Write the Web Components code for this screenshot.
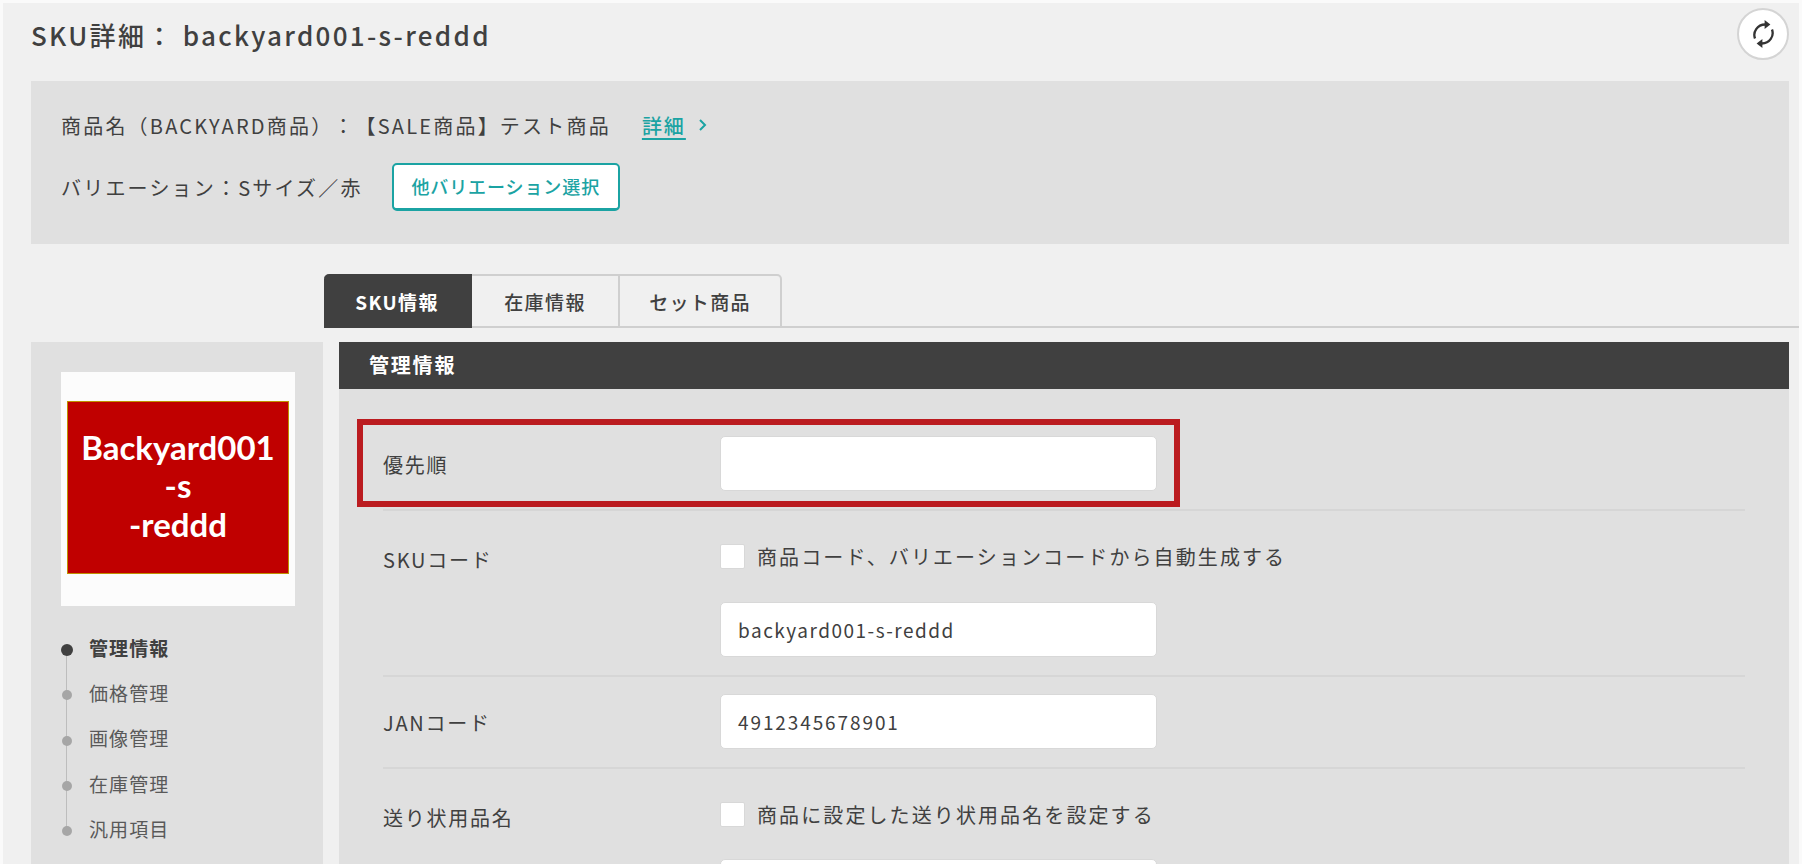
<!DOCTYPE html>
<html lang="ja">
<head>
<meta charset="utf-8">
<title>SKU詳細</title>
<style>
  html, body { margin: 0; height: 864px; overflow: hidden; background: #fafafa; }
  body { font-family: "Noto Sans CJK JP", "Noto Sans", sans-serif; color: #404040; padding: 3px 3px 0; box-sizing: border-box; text-spacing-trim: space-all; }
</style>
</head>
<body>
<template id="page-tpl">
  <style>
    :host { display: block; background: #f0f0f0; height: 861px; padding: 0 10px 0 28px; box-sizing: border-box; overflow: hidden; }
    .cols { display: flex; gap: 16px; margin-top: 14px; }
    ::slotted(sku-sidenav) { flex: 0 0 292px; }
    ::slotted(sku-section) { flex: 1; }
  </style>
  <slot name="top"></slot>
  <div class="cols"><slot name="side"></slot><slot name="main"></slot></div>
</template>

<template id="header-tpl">
  <style>
    :host { display: flex; justify-content: space-between; height: 78px; box-sizing: border-box; }
    h1 { margin: 0; padding-top: 12px; font-size: 26px; line-height: 40px; font-weight: 500; letter-spacing: 2.3px; color: #404040; }
    button { width: 52px; height: 52px; margin-top: 5px; padding: 0; border-radius: 50%; border: 2px solid #d4d4d4; background: #fff; display: flex; align-items: center; justify-content: center; }
  </style>
  <h1><slot></slot></h1>
  <button aria-label="更新">
    <svg width="23" height="28" viewBox="0 0 23 28" fill="none">
      <path d="M3 18.5C.6 12 5.2 4.6 13.2 4.5" stroke="#333" stroke-width="2.3"/>
      <path d="M12.6 0l5.8 4.5-5.8 4.5z" fill="#333"/>
      <path d="M20 9.5c2.4 6.5-2.2 13.9-10.2 14" stroke="#333" stroke-width="2.3"/>
      <path d="M10.4 19l-5.8 4.5 5.8 4.5z" fill="#333"/>
    </svg>
  </button>
</template>

<template id="summary-tpl">
  <style>
    :host { display: block; background: #e0e0e0; height: 163px; box-sizing: border-box; padding: 28px 30px 0; font-size: 20px; color: #404040; }
    .line { display: flex; align-items: center; }
    .first { height: 32px; letter-spacing: 2.2px; }
    .second { margin-top: 22px; height: 48px; letter-spacing: 2.2px; }
    a { color: #1ba3a3; text-decoration: underline; text-underline-offset: 4px; margin-left: 31px; font-weight: 500; letter-spacing: 2px; }
    svg { margin-left: 12px; }
    ::slotted(sku-outline-btn) { margin-left: 29px; }
  </style>
  <div class="line first"><slot name="product"></slot><a href="#"><slot name="link"></slot></a>
    <svg width="9" height="14" viewBox="0 0 9 14" fill="none"><path d="M2 2l5 5-5 5" stroke="#1ba3a3" stroke-width="2"/></svg>
  </div>
  <div class="line second"><slot name="variation"></slot><slot name="action"></slot></div>
</template>

<template id="btn-tpl">
  <style>
    :host { display: inline-block; }
    button { width: 228px; height: 48px; padding: 0 0 2px; background: #fff; color: #1ba3a3; border: 2px solid #1ba3a3; border-bottom-width: 3px; border-radius: 5px; font: 500 18px "Noto Sans CJK JP", sans-serif; letter-spacing: .9px; }
  </style>
  <button><slot></slot></button>
</template>

<template id="tabs-tpl">
  <style>
    :host { display: flex; margin: 30px -10px 0 293px; height: 54px; border-bottom: 2px solid #cfcfcf; box-sizing: border-box; }
  </style>
  <slot></slot>
</template>

<template id="tab-tpl">
  <style>
    :host { display: flex; align-items: center; justify-content: center; width: 148px; height: 54px; box-sizing: border-box; border: 2px solid #cfcfcf; border-left-width: 0; font-size: 19px; letter-spacing: 1.4px; font-weight: 500; color: #404040; background: #f0f0f0; }
    :host([wide]) { width: 162px; border-radius: 0 5px 0 0; letter-spacing: 1.3px; }
    :host([active]) { background: #404040; color: #fff; border-color: #404040; border-radius: 5px 0 0 0; font-weight: 700; }
  </style>
  <slot></slot>
</template>

<template id="sidenav-tpl">
  <style>
    :host { display: block; background: #e0e0e0; height: 522px; padding: 30px 28px 0 30px; box-sizing: border-box; }
    .thumb { width: 234px; height: 234px; box-sizing: border-box; padding: 29px 6px 0; background: #fcfcfc; }
    .red { height: 173px; box-sizing: border-box; padding-bottom: 4px; background: #c00000; border: 1px solid #bf9000; color: #fff; font: 700 33px/38.5px Lato, sans-serif; text-align: center; display: flex; align-items: center; justify-content: center; }
    ul { list-style: none; margin: 20px 0 0; padding: 0; position: relative; }
    ul::before { content: ""; position: absolute; left: 5px; top: 24px; bottom: 24px; width: 1px; background: #bdbdbd; }
  </style>
  <div class="thumb"><div class="red"><slot name="thumb"></slot></div></div>
  <ul><slot></slot></ul>
</template>

<template id="navitem-tpl">
  <style>
    :host { display: flex; align-items: center; height: 45.3px; font-size: 19px; letter-spacing: 1.1px; color: #595959; position: relative; padding: 0 0 3px 28px; box-sizing: border-box; }
    i { position: absolute; left: 1px; top: 19px; width: 10px; height: 10px; border-radius: 50%; background: #a6a6a6; }
    :host([active]) { font-weight: 700; color: #404040; }
    :host([active]) i { left: 0; top: 18px; width: 12px; height: 12px; background: #404040; }
  </style>
  <i></i><slot></slot>
</template>

<template id="section-tpl">
  <style>
    :host { display: block; background: #e0e0e0; height: 522px; position: relative; overflow: hidden; }
    h2 { margin: 0; height: 47px; background: #404040; color: #fff; font-size: 20px; font-weight: 700; letter-spacing: 1.8px; line-height: 45px; padding-left: 30px; }
    .body { padding: 47px 44px 0 44px; }
    .mark { position: absolute; left: 18px; top: 77px; width: 823px; height: 88px; box-sizing: border-box; border: 6px solid #bb1c20; }
  </style>
  <h2><slot name="title"></slot></h2>
  <div class="body"><slot></slot></div>
  <div class="mark"></div>
</template>

<template id="row-tpl">
  <style>
    :host { display: flex; border-bottom: 2px solid #d6d6d6; padding: var(--top, 17px) 0 18px; }
    :host([last]) { border-bottom: 0; }
    .label { flex: 0 0 337px; font-size: 20px; letter-spacing: 1.75px; color: #404040; line-height: var(--lh, 58px); height: var(--h, 55px); white-space: nowrap; }
    .ctl { display: flex; flex-direction: column; gap: var(--gap, 33px); }
  </style>
  <div class="label"><slot name="label"></slot></div>
  <div class="ctl"><slot></slot></div>
</template>

<template id="field-tpl">
  <style>
    :host { display: flex; align-items: center; width: 437px; height: 55px; box-sizing: border-box; padding: 0 17px; background: #fff; border: 1px solid #d8d8d8; border-radius: 5px; font-size: 19px; letter-spacing: 1.5px; color: #404040; }
  </style>
  <slot></slot>
</template>

<template id="check-tpl">
  <style>
    :host { display: flex; align-items: center; height: 25px; font-size: 20px; letter-spacing: 2.1px; color: #404040; white-space: nowrap; }
    i { width: 25px; height: 25px; box-sizing: border-box; background: #fff; border: 1px solid #d8d8d8; border-radius: 2px; margin-right: 12px; flex: none; }
  </style>
  <i></i><slot></slot>
</template>

<sku-page>
  <sku-header slot="top">SKU詳細： backyard001-s-reddd</sku-header>
  <sku-summary slot="top">
    <span slot="product">商品名（BACKYARD商品）：【SALE商品】テスト商品</span>
    <span slot="link">詳細</span>
    <span slot="variation">バリエーション：Sサイズ／赤</span>
    <sku-outline-btn slot="action">他バリエーション選択</sku-outline-btn>
  </sku-summary>
  <sku-tabs slot="top">
    <sku-tab active>SKU情報</sku-tab>
    <sku-tab>在庫情報</sku-tab>
    <sku-tab wide>セット商品</sku-tab>
  </sku-tabs>

  <sku-sidenav slot="side">
    <span slot="thumb">Backyard001<br>-s<br>-reddd</span>
    <sku-navitem active>管理情報</sku-navitem>
    <sku-navitem>価格管理</sku-navitem>
    <sku-navitem>画像管理</sku-navitem>
    <sku-navitem>在庫管理</sku-navitem>
    <sku-navitem>汎用項目</sku-navitem>
  </sku-sidenav>

  <sku-section slot="main">
    <span slot="title">管理情報</span>
    <sku-row style="--top:0px"><span slot="label">優先順</span><sku-field></sku-field></sku-row>
    <sku-row style="--top:33px;--lh:31px;--h:25px"><span slot="label">SKUコード</span>
      <sku-check>商品コード、バリエーションコードから自動生成する</sku-check>
      <sku-field>backyard001-s-reddd</sku-field>
    </sku-row>
    <sku-row><span slot="label">JANコード</span><sku-field style="letter-spacing:1.9px">4912345678901</sku-field></sku-row>
    <sku-row last style="--top:33px;--lh:31px;--h:25px;--gap:32px"><span slot="label">送り状用品名</span>
      <sku-check>商品に設定した送り状用品名を設定する</sku-check>
      <sku-field></sku-field>
    </sku-row>
  </sku-section>
</sku-page>

<script>
  // every element here is just a template stamped into an open shadow root
  const parts = {
    "sku-page": "page-tpl",
    "sku-header": "header-tpl",
    "sku-summary": "summary-tpl",
    "sku-outline-btn": "btn-tpl",
    "sku-tabs": "tabs-tpl",
    "sku-tab": "tab-tpl",
    "sku-sidenav": "sidenav-tpl",
    "sku-navitem": "navitem-tpl",
    "sku-section": "section-tpl",
    "sku-row": "row-tpl",
    "sku-field": "field-tpl",
    "sku-check": "check-tpl"
  };

  Object.keys(parts).forEach((name) => {
    const tpl = document.getElementById(parts[name]);
    customElements.define(name, class extends HTMLElement {
      constructor() {
        super();
        this.attachShadow({ mode: "open" });
        this.shadowRoot.appendChild(tpl.content.cloneNode(true));
      }
    });
  });
</script>
</body>
</html>
